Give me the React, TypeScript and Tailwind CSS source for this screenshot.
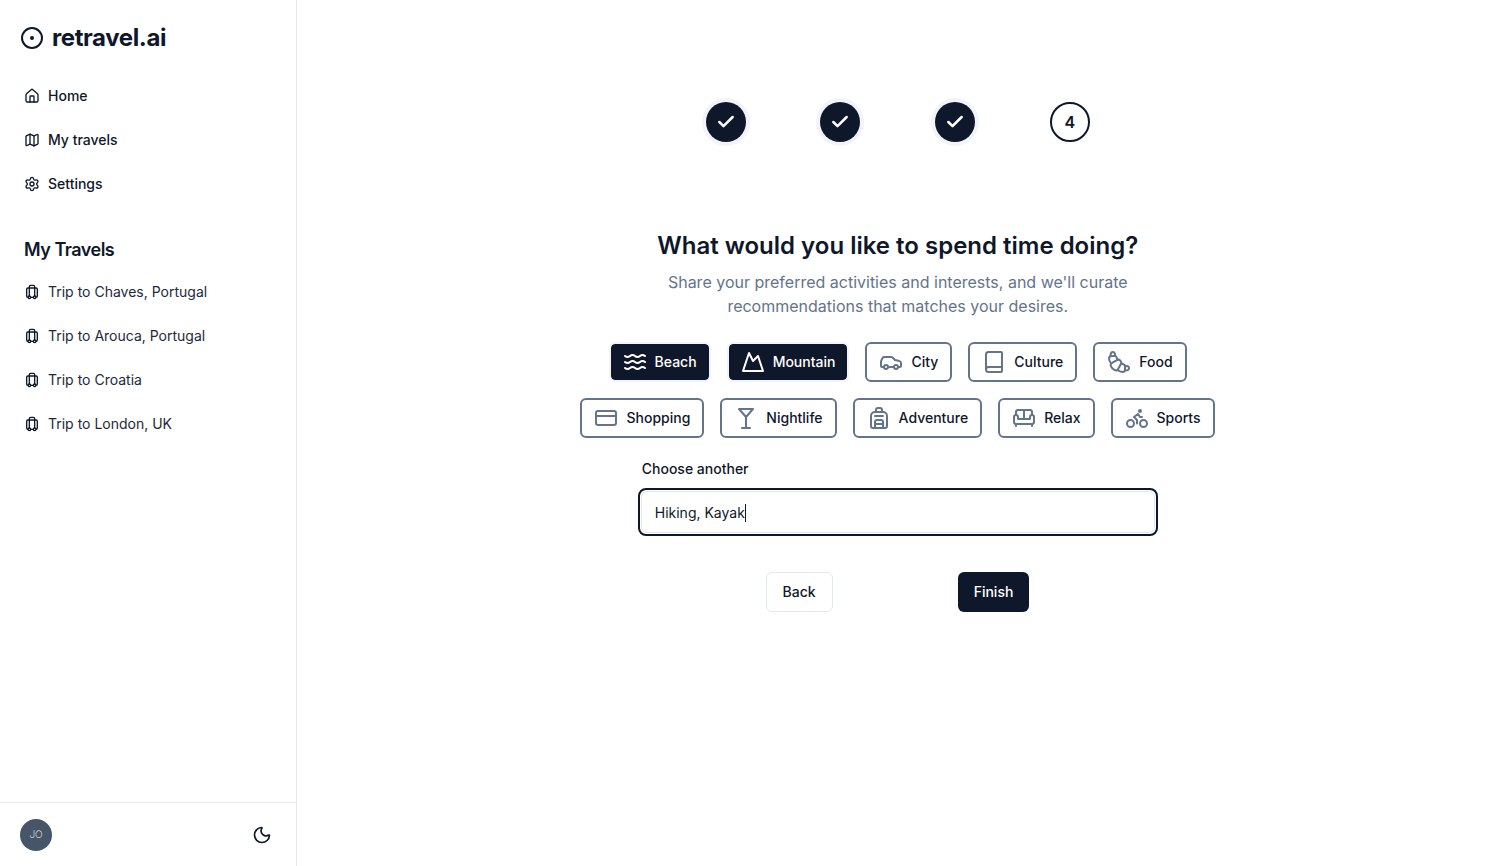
import React from "react";
import { Backpack, Bike, Book, Car, Check, CircleDot, CreditCard, House, Luggage, Map, Martini, Moon, Mountain, Settings, Sofa, Waves } from "lucide-react";

function CroissantIcon({ size = 24, strokeWidth = 2, className }: { size?: number; strokeWidth?: number; className?: string }) {
  return (
    <svg width={size} height={size} viewBox="0 0 24 24" fill="none" stroke="currentColor" strokeWidth={strokeWidth} strokeLinecap="round" strokeLinejoin="round" className={className}>
      <path d="m4.6 13.11 5.79-3.21c1.89-1.05 4.79 1.78 3.71 3.71l-3.22 5.81C8.8 23.16.79 15.23 4.6 13.11Z" />
      <path d="m10.5 9.5-1-2.29C9.2 6.48 8.8 6 8 6H4.5C2.79 6 2 6.5 2 8.5a7.71 7.71 0 0 0 2 4.83" />
      <path d="M8 6c0-1.55.24-4-2-4-2 0-2.5 2.17-2.5 4" />
      <path d="m14.5 13.5 2.29 1c.73.3 1.21.7 1.21 1.5v3.5c0 1.71-.5 2.5-2.5 2.5a7.71 7.71 0 0 1-4.83-2" />
      <path d="M18 16c1.55 0 4-.24 4 2 0 2-2.17 2.5-4 2.5" />
    </svg>
  );
}

const nav = [
  { label: "Home", Icon: House },
  { label: "My travels", Icon: Map },
  { label: "Settings", Icon: Settings },
];
const trips = ["Trip to Chaves, Portugal", "Trip to Arouca, Portugal", "Trip to Croatia", "Trip to London, UK"];
const row1 = [
  { label: "Beach", Icon: Waves, on: true },
  { label: "Mountain", Icon: Mountain, on: true },
  { label: "City", Icon: Car },
  { label: "Culture", Icon: Book },
  { label: "Food", Icon: CroissantIcon },
];
const row2 = [
  { label: "Shopping", Icon: CreditCard },
  { label: "Nightlife", Icon: Martini },
  { label: "Adventure", Icon: Backpack },
  { label: "Relax", Icon: Sofa },
  { label: "Sports", Icon: Bike },
];

function Chip({ label, Icon, on }: { label: string; Icon: React.ComponentType<any>; on?: boolean }) {
  return on ? (
    <button className="flex h-10 items-center gap-2 rounded-md border-2 border-[#f1f5f9] bg-[#0f172a] bg-clip-padding px-3 text-sm font-medium text-white">
      <Icon size={24} strokeWidth={2} />
      {label}
    </button>
  ) : (
    <button className="flex h-10 items-center gap-2 rounded-md border-2 border-[#64748b] px-3 text-sm font-medium text-[#0f172a]">
      <Icon size={24} strokeWidth={2} className="text-[#64748b]" />
      {label}
    </button>
  );
}

function Done() {
  return (
    <div className="flex h-10 w-10 items-center justify-center rounded-full bg-[#0f172a] text-white ring-4 ring-[#f1f5f9]">
      <Check size={20} strokeWidth={3} />
    </div>
  );
}

export default function App() {
  return (
    <div className="flex h-[866px] bg-white text-[#0f172a] [font-family:Inter,sans-serif]">
      <aside className="flex w-[297px] shrink-0 flex-col border-r border-[#e2e8f0]">
        <div className="flex-1">
          <div className="flex items-center gap-[8px] pl-[20px] pt-[22px]">
            <CircleDot size={24} strokeWidth={2} />
            <span className="text-2xl font-bold leading-8 tracking-[-0.4px]">retravel.ai</span>
          </div>
          <nav className="mt-[20px] flex flex-col pl-6">
            {nav.map(({ label, Icon }) => (
              <a key={label} className="flex h-11 items-center gap-2 text-sm font-medium">
                <Icon size={16} strokeWidth={2} className="text-[#0f172a]" />
                {label}
              </a>
            ))}
          </nav>
          <h2 className="mt-[30px] pl-6 text-lg font-semibold leading-7 tracking-[-0.5px]">My Travels</h2>
          <div className="mt-[6px] flex flex-col pl-6">
            {trips.map((t) => (
              <a key={t} className="flex h-11 items-center gap-2 text-sm text-[#1e293b]">
                <Luggage size={16} strokeWidth={2} className="text-[#0f172a]" />
                {t}
              </a>
            ))}
          </div>
        </div>
        <div className="flex h-[64px] items-center justify-between border-t border-[#e2e8f0] pl-5 pr-6">
          <div className="flex h-8 w-8 items-center justify-center rounded-full bg-[#475569] text-[10px] font-extralight text-white">JO</div>
          <Moon size={20} strokeWidth={2} />
        </div>
      </aside>
      <main className="flex flex-1 flex-col items-center pl-[5.5px] pt-[102px]">
        <div className="flex w-96 justify-between">
          <Done />
          <Done />
          <Done />
          <div className="flex h-10 w-10 items-center justify-center rounded-full border-2 border-[#0f172a] text-base font-semibold">4</div>
        </div>
        <h1 className="mt-[88px] text-2xl font-semibold leading-8">What would you like to spend time doing?</h1>
        <p className="mt-[8px] w-[512px] text-center text-base leading-6 text-[#64748b]">
          Share your preferred activities and interests, and we'll curate recommendations that matches your desires.
        </p>
        <div className="mt-[24px] flex flex-col items-center gap-4">
          <div className="flex gap-4 pr-[0.25px]">
            {row1.map((c) => (
              <Chip key={c.label} {...c} />
            ))}
          </div>
          <div className="flex gap-4 pr-[0.5px]">
            {row2.map((c) => (
              <Chip key={c.label} {...c} />
            ))}
          </div>
        </div>
        <div className="mt-[21px] w-[520px]">
          <label className="block pl-1 text-sm font-medium leading-5">Choose another</label>
          <div className="mt-[9px] flex h-12 items-center rounded-lg border-2 border-[#0f172a] p-px">
            <div className="flex h-full w-full items-center rounded-md border border-[#e2e8f0] px-[13px] pt-px text-sm">
              Hiking, Kayak
              <span className="h-[18px] w-px bg-[#0f172a]" />
            </div>
          </div>
        </div>
        <div className="mt-[36px] flex gap-[125px] pr-[0.5px]">
          <button className="h-10 rounded-md border border-[#e2e8f0] px-4 text-sm font-medium">Back</button>
          <button className="h-10 rounded-md bg-[#0f172a] px-4 text-sm font-medium text-white">Finish</button>
        </div>
      </main>
    </div>
  );
}
